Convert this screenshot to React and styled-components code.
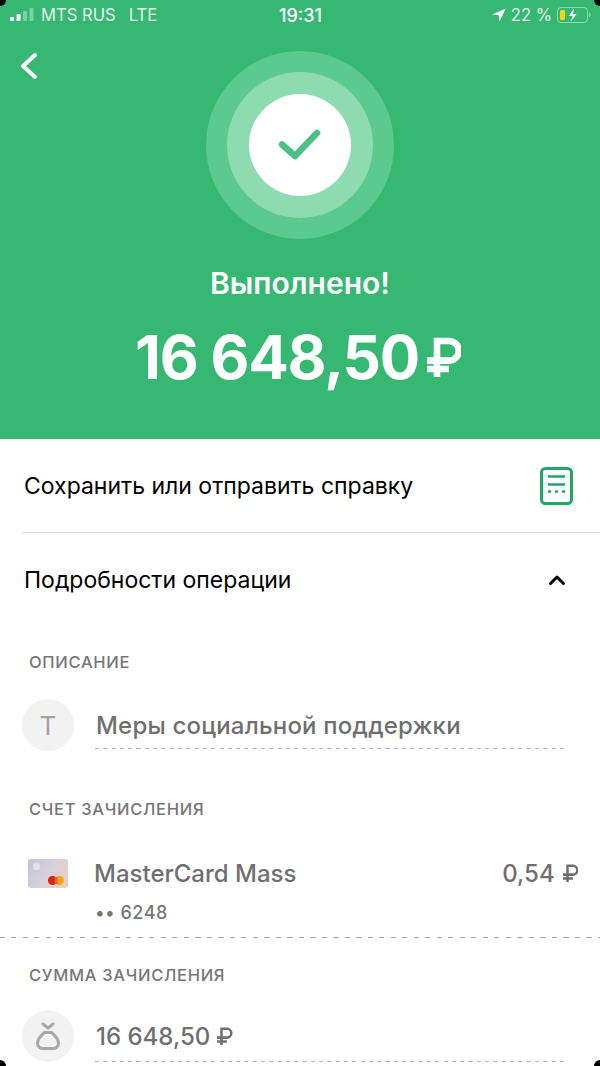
import React from 'react'
import styled, { createGlobalStyle } from 'styled-components'

const Global = createGlobalStyle`
  html, body { margin: 0; padding: 0; background: #fff; }
  body { font-family: Inter, "Noto Sans", "Liberation Sans", sans-serif; }
`

const Screen = styled.div`
  position: relative;
  width: 600px;
  height: 1066px;
  overflow: hidden;
  background: #fff;
`

const Corner = styled.div`
  position: absolute;
  width: 12px;
  height: 12px;
  ${p => (p.$bottom ? 'bottom: -6px;' : 'top: -6px;')}
  ${p => (p.$right ? 'right: -6px;' : 'left: -6px;')}
  background: #000;
  border-radius: 50%;
`

const Hero = styled.header`
  height: 439px;
  background: #36b873;
  color: #fff;
  display: flex;
  flex-direction: column;
`

const StatusBar = styled.div`
  height: 30px;
  padding: 0 9px 0 10px;
  display: grid;
  grid-template-columns: 1fr auto 1fr;
  align-items: center;
  font-size: 16.6px;
  color: #e6f6ed;
`

const StatusLeft = styled.div`
  display: flex;
  align-items: center;
  gap: 6px;
`

const StatusRight = styled.div`
  display: flex;
  align-items: center;
  justify-content: flex-end;
  gap: 5px;
`

const Clock = styled.div`
  font-size: 18px;
  font-weight: 500;
  color: #fff;
`

const Carrier = styled.span`
  margin-right: 7px;
`

const HeroBody = styled.div`
  position: relative;
  display: flex;
  flex-direction: column;
  align-items: center;
  padding-top: 21px;
`

const BackButton = styled.button`
  position: absolute;
  left: 18px;
  top: 20px;
  padding: 0;
  border: 0;
  background: none;
  display: flex;
`

const Ring = styled.div`
  display: flex;
  align-items: center;
  justify-content: center;
  border-radius: 50%;
  width: ${p => p.$size}px;
  height: ${p => p.$size}px;
  background: ${p => p.$bg};
`

const Title = styled.h1`
  margin: 27px 0 0;
  font-size: 30px;
  line-height: 34px;
  font-weight: 600;
`

const Amount = styled.div`
  margin: 21px 4px 0 0;
  font-size: 60px;
  line-height: 72px;
  font-weight: 700;
  letter-spacing: -1.2px;
  display: flex;
  align-items: center;
  gap: 8px;
`

const ActionRow = styled.div`
  display: flex;
  align-items: center;
  justify-content: space-between;
  margin-left: ${p => p.$inset || 24}px;
  height: ${p => p.$h}px;
  padding-right: ${p => p.$pr}px;
  font-size: 23px;
  color: #000;
  ${p => p.$line && 'border-bottom: 1px solid #d9d9d9;'}
`

const ActionText = styled.span`
  margin-left: ${p => p.$ml || 0}px;
`

const SectionLabel = styled.div`
  margin: ${p => p.$top}px 0 0 29px;
  height: 20px;
  line-height: 20px;
  font-size: 16.5px;
  font-weight: 500;
  letter-spacing: 0.7px;
  color: #767676;
`

const InfoRow = styled.div`
  display: flex;
  align-items: center;
  gap: 22px;
  margin: ${p => p.$top}px 0 0 22px;
`

const Avatar = styled.div`
  width: 52px;
  height: 52px;
  flex: none;
  border-radius: 50%;
  background: #f2f2f2;
  color: #a3a3a3;
  font-size: 26px;
  display: flex;
  align-items: center;
  justify-content: center;
`

const Value = styled.div`
  font-size: 24px;
  font-weight: 500;
  letter-spacing: ${p => p.$ls || 0}px;
  color: #6f6f6f;
`

const ValueLine = styled.div`
  margin: ${p => p.$top}px 35px 0 95px;
  height: 1px;
  background: repeating-linear-gradient(90deg, #b5b5b5 0 4px, transparent 4px 8.300px);
`

const AccountRow = styled.div`
  display: flex;
  align-items: center;
  justify-content: space-between;
  margin: 39px 22px 0 28px;
  height: 30px;
`

const AccountName = styled.div`
  display: flex;
  align-items: center;
  gap: 26px;
  font-size: 24px;
  font-weight: 500;
  color: #6f6f6f;
`

const CardThumb = styled.div`
  position: relative;
  width: 40px;
  height: 29px;
  border-radius: 3px;
  background: linear-gradient(125deg, #c2c2d6 0%, #d6d2dc 50%, #f0cdbd 100%);
  &::before {
    content: '';
    position: absolute;
    left: 5px;
    top: 4px;
    width: 7px;
    height: 7px;
    border-radius: 2px;
    background: #e0e0ea;
  }
`

const CardMark = styled.svg`
  position: absolute;
  right: 4px;
  bottom: 3px;
`

const AccountNumber = styled.div`
  margin: 15px 0 0 95px;
  height: 20px;
  line-height: 20px;
  font-size: 18px;
  font-weight: 500;
  letter-spacing: 0.5px;
  color: #767676;
`

const FullDash = styled.div`
  margin-top: 14px;
  height: 1px;
  background: repeating-linear-gradient(90deg, #a8a8a8 0 5px, transparent 5px 11.500px);
`

const Row = styled.span`
  display: flex;
  align-items: center;
  gap: ${p => p.$gap}px;
`

const Signal = () => (
  <svg width="25" height="14" viewBox="0 0 25 14">
    <rect x="0" y="9" width="4" height="4" rx="1" fill="#fff" />
    <rect x="6.500" y="6" width="4" height="7" rx="1" fill="#fff" />
    <rect x="13" y="3" width="4" height="10" rx="1" fill="#fff" fillOpacity=".35" />
    <rect x="19.500" y="0" width="4" height="13" rx="1" fill="#fff" fillOpacity=".35" />
  </svg>
)

const Location = () => (
  <svg width="14" height="14" viewBox="0 0 14 14">
    <path d="M13.800 .4 .2 6.600l6.600.6.6 6.600z" fill="#fff" />
  </svg>
)

const Battery = () => (
  <svg width="34" height="16" viewBox="0 0 34 16">
    <rect x=".5" y=".5" width="30" height="15" rx="3.500" fill="none" stroke="#fff" strokeOpacity=".45" />
    <rect x="3" y="3" width="5" height="10" rx="1.500" fill="#ffd60a" />
    <path d="M32 5.500v5c1-.3 1.500-1.300 1.500-2.500S33 5.800 32 5.500z" fill="#fff" fillOpacity=".45" />
    <path d="M17 1.500 12 9h3.500L14 14.500 19.500 7H16z" fill="#fff" />
  </svg>
)

const Ruble = ({ size, color, weight }) => (
  <svg width={size * 0.85} height={size} viewBox="0 0 17 20" fill="none" stroke={color} strokeWidth={weight}>
    <path d="M5 20V2h6a4.800 4.800 0 0 1 0 9.800H0M0 16h11" />
  </svg>
)

function App() {
  return (
    <Screen>
      <Global />
      <Hero>
        <StatusBar>
          <StatusLeft>
            <Signal />
            <Carrier>MTS RUS</Carrier>
            <span>LTE</span>
          </StatusLeft>
          <Clock>19:31</Clock>
          <StatusRight>
            <Location />
            <span>22 %</span>
            <Battery />
          </StatusRight>
        </StatusBar>
        <HeroBody>
          <BackButton aria-label="Назад">
            <svg width="24" height="32" viewBox="0 0 24 32" fill="none" stroke="#fff" strokeWidth="4" strokeLinecap="round" strokeLinejoin="round">
              <path d="M17 5 5 16l12 11" />
            </svg>
          </BackButton>
          <Ring $size={188} $bg="#5cc98f">
            <Ring $size={146} $bg="#8fdbb1">
              <Ring $size={102} $bg="#fff">
                <svg width="44" height="34" viewBox="0 0 44 34" fill="none" stroke="#4cbf85" strokeWidth="6.500" strokeLinecap="round" strokeLinejoin="round">
                  <path d="M4 16.500 17 28 39 5" />
                </svg>
              </Ring>
            </Ring>
          </Ring>
          <Title>Выполнено!</Title>
          <Amount>
            16 648,50
            <Ruble size={40} color="#fff" weight={3.300} />
          </Amount>
        </HeroBody>
      </Hero>

      <ActionRow $inset={22} $h={93} $pr={27} $line>
        <ActionText $ml={2}>Сохранить или отправить справку</ActionText>
        <svg width="33" height="38" viewBox="0 0 33 38" fill="none" stroke="#22a565" strokeWidth="3">
          <rect x="1.500" y="1.500" width="30" height="35" rx="4" />
          <path d="M8 9.500h17M8 17.500h17" strokeWidth="2.500" />
          <path d="M8 24.500h3M15 24.500h3M22 24.500h3" strokeWidth="2.500" />
        </svg>
      </ActionRow>
      <ActionRow $h={94} $pr={34}>
        <span>Подробности операции</span>
        <svg width="18" height="12" viewBox="0 0 18 12" fill="none" stroke="#000" strokeWidth="3" strokeLinecap="round" strokeLinejoin="round">
          <path d="M2.500 9.500 9 3l6.500 6.500" />
        </svg>
      </ActionRow>

      <SectionLabel $top={25}>ОПИСАНИЕ</SectionLabel>
      <InfoRow $top={27}>
        <Avatar>Т</Avatar>
        <Value $ls={0.2}>Меры социальной поддержки</Value>
      </InfoRow>
      <ValueLine $top={-3} />

      <SectionLabel $top={50}>СЧЕТ ЗАЧИСЛЕНИЯ</SectionLabel>
      <AccountRow>
        <AccountName>
          <CardThumb>
            <CardMark width="16" height="9" viewBox="0 0 16 9">
              <circle cx="11.500" cy="4.500" r="4.500" fill="#f5a623" />
              <circle cx="4.500" cy="4.500" r="4.500" fill="#d9220f" />
              <rect x="6.500" y="1" width="3" height="7" fill="#f0611e" />
            </CardMark>
          </CardThumb>
          MasterCard Mass
        </AccountName>
        <AccountName>
          <Row $gap={8}>
            0,54
            <Ruble size={18} color="#6f6f6f" weight={2.800} />
          </Row>
        </AccountName>
      </AccountRow>
      <AccountNumber>•• 6248</AccountNumber>
      <FullDash />

      <SectionLabel $top={27}>СУММА ЗАЧИСЛЕНИЯ</SectionLabel>
      <InfoRow $top={25}>
        <Avatar>
          <svg width="24" height="28" viewBox="0 0 24 28" fill="none" stroke="#a8a8a8" strokeWidth="3" strokeLinecap="round" strokeLinejoin="round">
            <path d="M7 2 12 6l5-4" />
            <path d="M8.500 10.500h7C19 13.500 22.500 18 22.500 21c0 3.500-2.500 5.500-5.500 5.500H7C4 26.500 1.500 24.500 1.500 21c0-3 3.500-7.500 7-10.500z" />
          </svg>
        </Avatar>
        <Value>
          <Row $gap={7}>
            16 648,50
            <Ruble size={18} color="#6f6f6f" weight={2.800} />
          </Row>
        </Value>
      </InfoRow>
      <ValueLine $top={-1} />

      <Corner />
      <Corner $right />
      <Corner $bottom />
      <Corner $bottom $right />
    </Screen>
  )
}

export default App
